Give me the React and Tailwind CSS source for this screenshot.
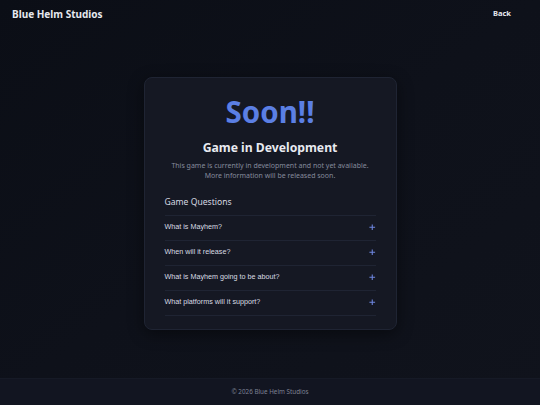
const questions = [
  "What is Mayhem?",
  "When will it release?",
  "What is Mayhem going to be about?",
  "What platforms will it support?",
];

const Plus = () => (
  <svg width="6.5" height="6.5" viewBox="0 0 8 8" className="text-[#6f86e0]">
    <path d="M4 0.5v7M0.5 4h7" stroke="currentColor" strokeWidth="1.3" />
  </svg>
);

export default function App() {
  return (
    <div className="flex flex-col h-[405px] w-[540px] overflow-hidden bg-gradient-to-br from-[#0b0e16] via-[#0e111a] to-[#10131c] font-['Noto_Sans',sans-serif] text-[#e6e8ee]">
      <header className="flex items-center justify-between h-[28px] px-[12px]">
        <span className="text-[10px] font-bold">Blue Helm Studios</span>
        <span className="text-[7.5px] font-bold pr-[17px]">Back</span>
      </header>

      <main className="flex-1 flex items-center justify-center">
        <div className="w-[253px] rounded-[8px] bg-[#151823] border border-[#1f2433] shadow-[0_4px_16px_rgba(0,0,0,0.45)] px-[20px] pt-[13px] pb-[13px]">
          <div className="text-center">
            <h1 className="text-[29.5px] leading-[42px] font-bold text-[#5b7fe4]">Soon!!</h1>
            <h2 className="mt-[7px] text-[12.2px] leading-[16px] font-bold text-[#e8eaf0]">Game in Development</h2>
            <p className="mt-[5px] text-[7px] leading-[10px] text-[#858b9c]">
              This game is currently in development and not yet available.
              <br />
              More information will be released soon.
            </p>
          </div>

          <div className="mt-[15px]">
            <div className="text-[8.6px] leading-[12px] text-[#d6d9e2] pb-[7px]">Game Questions</div>
            <ul className="border-t border-[#1f2433]">
              {questions.map((q) => (
                <li
                  key={q}
                  className="flex items-center justify-between h-[25px] border-b border-[#1f2433] font-['Liberation_Sans',Arial,sans-serif]"
                >
                  <span className="text-[7.2px] text-[#d9dce4]">{q}</span>
                  <Plus />
                </li>
              ))}
            </ul>
          </div>
        </div>
      </main>

      <footer className="h-[27px] flex items-center justify-center bg-[#121521] border-t border-[#161a26]">
        <span className="text-[6.3px] text-[#7d8294]">© 2026 Blue Helm Studios</span>
      </footer>
    </div>
  );
}
